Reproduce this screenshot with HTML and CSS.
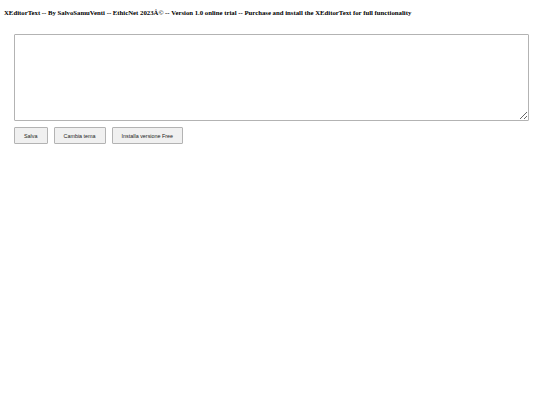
FILE: index.html
```html
<!DOCTYPE html>
<html lang="it">
<head>
<meta charset="utf-8">
<title>XEditorText</title>
<link rel="stylesheet" href="styles.css">
</head>
<body>
<h1 class="title">XEditorText -- By SalvoSamuVenti -- EthicNet 2023Â© -- Version 1.0 online trial -- Purchase and install the XEditorText for full functionality</h1>
<div class="editor">
  <textarea class="area"></textarea>
  <div class="actions">
    <button class="btn">Salva</button>
    <button class="btn">Cambia tema</button>
    <button class="btn">Installa versione Free</button>
  </div>
</div>
</body>
</html>
```
FILE: styles.css
```css
html, body {
  margin: 0;
  padding: 0;
  background: #ffffff;
}
body {
  padding: 4px;
  font-family: "Liberation Serif", serif;
}
.title {
  margin: 5px 0 0 0;
  font-size: 6.75px;
  font-weight: bold;
  line-height: 8px;
  color: #000;
}
.editor {
  margin: 17px 0 0 10px;
  width: 515px;
}
.area {
  display: block;
  box-sizing: border-box;
  width: 515px;
  height: 87px;
  margin: 0;
  border: 1px solid #b3b3b3;
  border-radius: 1px;
  resize: vertical;
  background: #fff;
}
.actions {
  display: flex;
  gap: 6px;
  margin-top: 6px;
}
.btn {
  box-sizing: border-box;
  height: 17px;
  padding: 0 9px;
  font-family: "Liberation Sans", Arial, sans-serif;
  font-size: 5.4px;
  color: #222;
  background: #f0f0f0;
  border: 1px solid #b3b3b3;
  border-radius: 1px;
}
```
